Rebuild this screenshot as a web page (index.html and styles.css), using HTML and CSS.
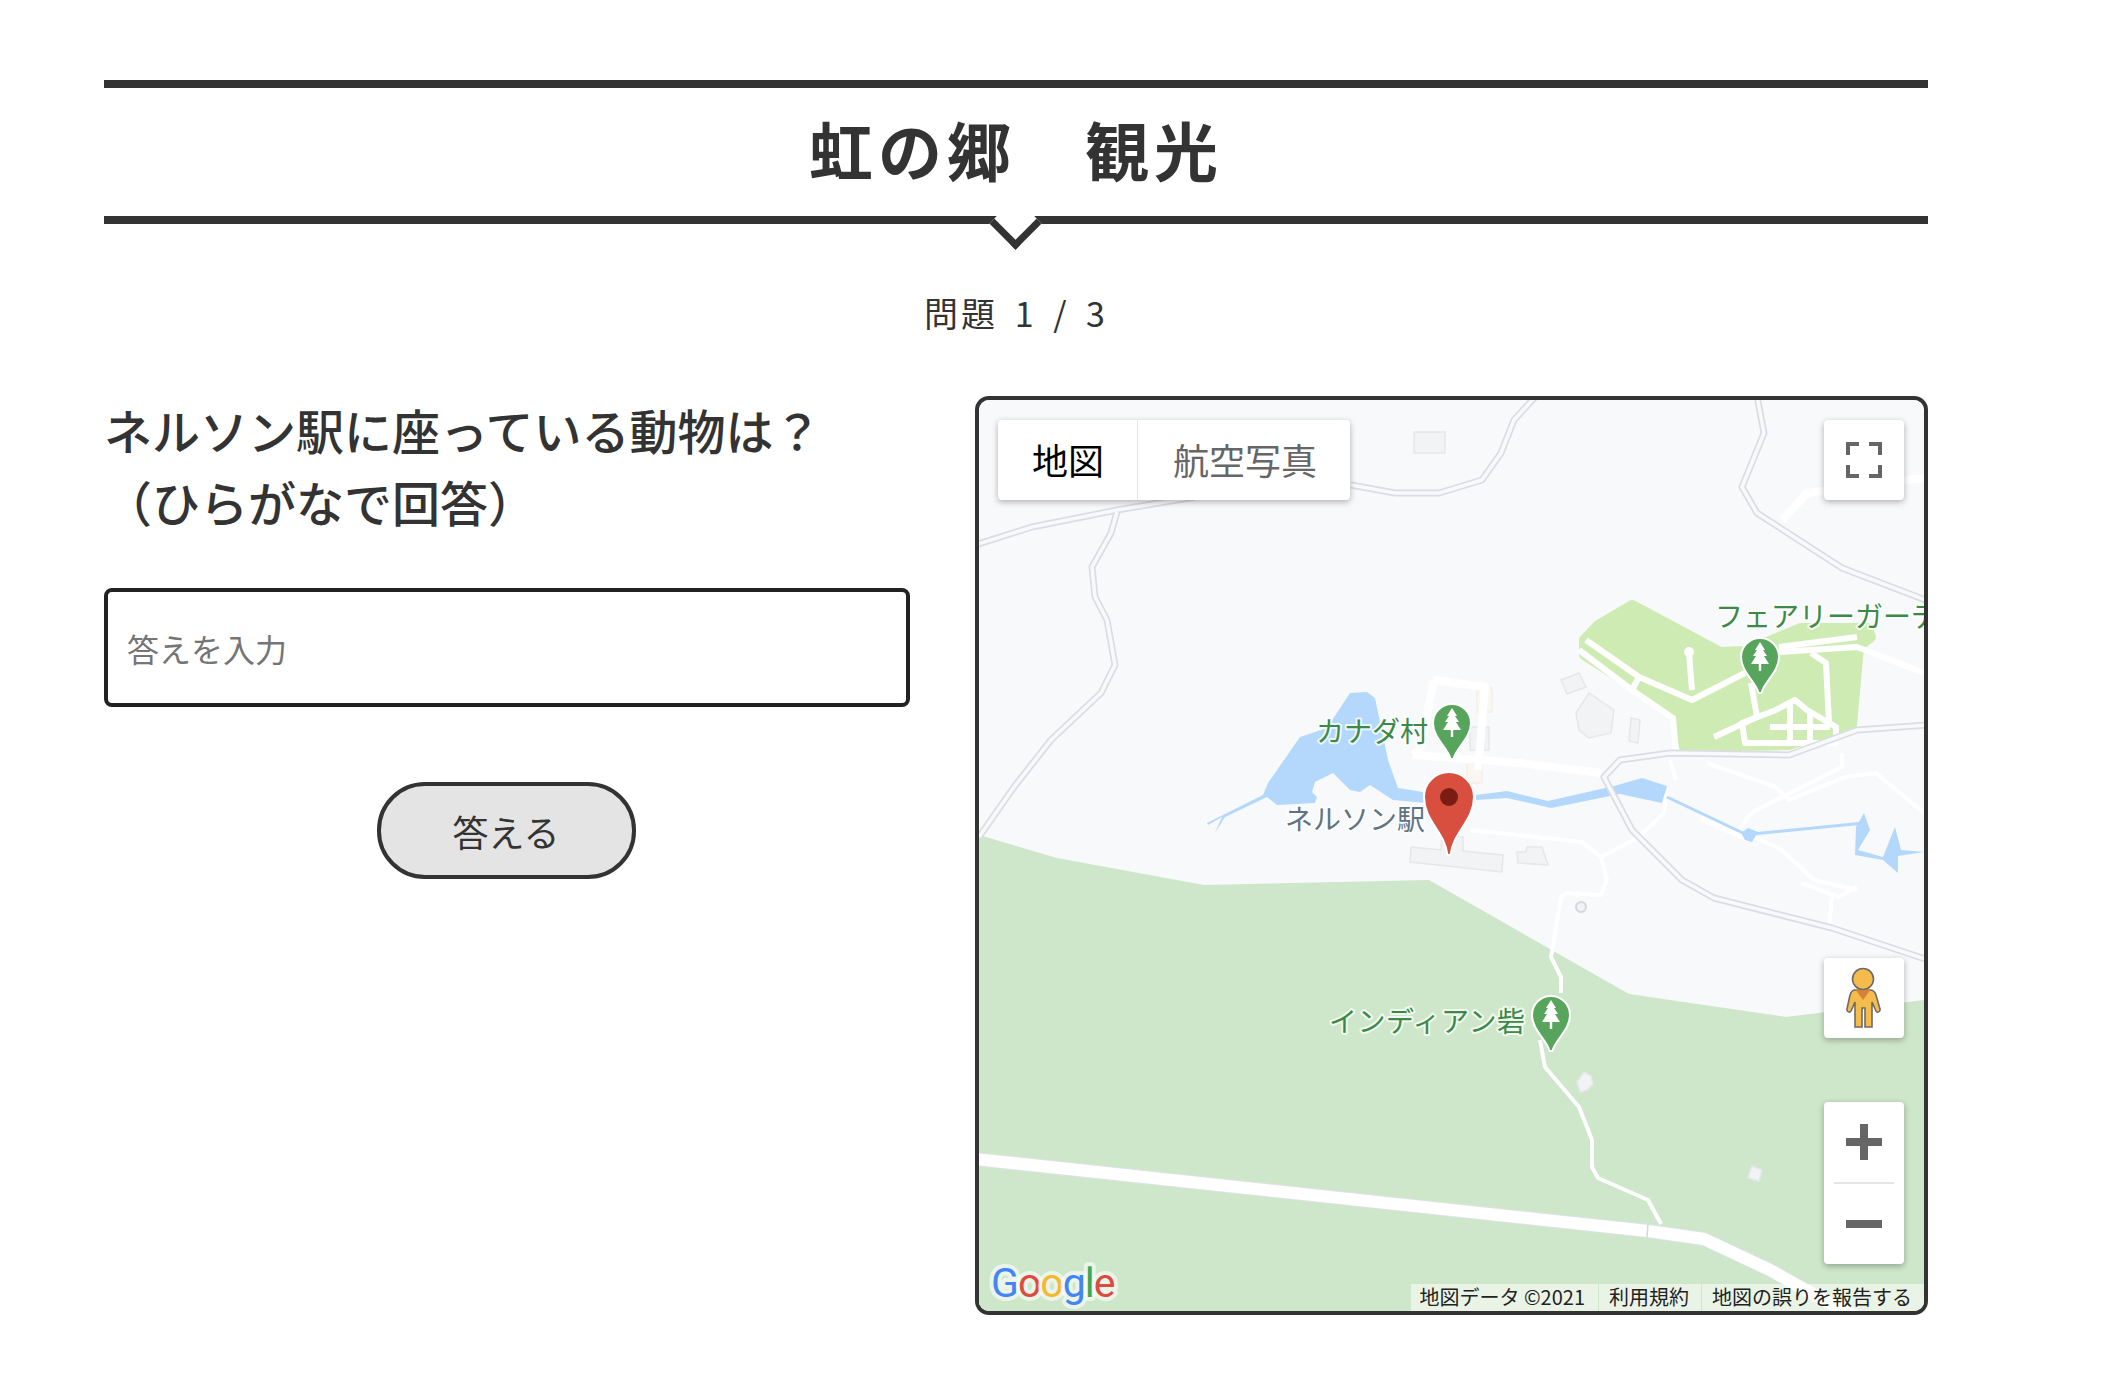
FILE: index.html
```html
<!DOCTYPE html>
<html lang="ja">
<head>
  <meta charset="UTF-8">
  <title>虹の郷 観光</title>
  <link rel="stylesheet" href="styles.css">
</head>
<body>
  <div class="page">
    <h1 class="title">虹の郷　観光</h1>
    <p class="progress">問題 1 / 3</p>

    <div class="quiz">
      <form class="answer-form">
        <h2 class="question">ネルソン駅に座っている動物は？<br>（ひらがなで回答）</h2>
        <input class="answer-input" type="text" placeholder="答えを入力">
        <button class="answer-btn" type="button">答える</button>
      </form>

      <div class="map">
        <!-- viewBox uses page coordinates so it is easy to compare with the screenshot -->
        <svg class="map-canvas" viewBox="979 400 945 911" width="945" height="911">
          <defs>
            <g id="roads">
              <polyline points="1536,396 1514,420 1501,453 1482,480 1439,493 1395,493 1351,485"/>
              <polyline points="975,545 1032,527 1117,510 1195,497"/>
              <polyline points="1117,512 1111,533 1092,567 1095,597 1107,620 1115,665 1101,693 1051,740 1014,787 979,837"/>
              <polyline points="1757,396 1764,433 1742,487 1757,513 1842,568 1928,601"/>
              <polyline points="1928,725 1857,730 1789,755 1670,753 1620,760 1604,777 1632,830 1682,880 1714,898 1832,928 1928,960"/>
            </g>
            <g id="pin">
              <path class="pin-body" d="M-1.500 36C-4 25-19 15-19 0A19 19 0 1 1 19 0C19 15 4 25 1.500 36Z"/>
              <path class="pin-tree" d="M0-15L5-7H3L7-1H4L9 7H1.200V14H-1.200V7H-9L-4-1H-7L-3-7H-5Z"/>
            </g>
          </defs>

          <rect class="land" x="979" y="400" width="945" height="911"/>
          <polygon class="forest" points="979,835 1057,858 1204,885 1429,880 1629,994 1786,1017 1924,1000 1924,1311 979,1311"/>
          <polygon class="park" points="1584,640 1598,625 1632,605 1668,624 1720,652 1745,651 1801,628 1868,628 1871,637 1859,647 1852,725 1789,745 1684,747 1678,718 1636,688 1584,655"/>

          <g class="building">
            <rect x="1414" y="432" width="31" height="21"/>
            <rect x="1470" y="727" width="19" height="23"/>
            <polygon points="1561,680 1579,673 1586,687 1567,694"/>
            <polygon points="1576,713 1589,693 1614,710 1611,733 1589,738 1579,730"/>
            <polygon points="1631,718 1640,720 1638,743 1629,741"/>
            <polygon points="1411,847 1441,850 1442,837 1463,837 1463,851 1503,855 1502,872 1410,862"/>
            <polygon points="1517,852 1526,852 1527,847 1542,847 1548,865 1518,863"/>
            <polygon points="1584,1072 1591,1076 1593,1084 1587,1090 1580,1092 1577,1082"/>
            <polygon points="1752,1166 1762,1170 1759,1181 1748,1178"/>
          </g>
          <g class="building-warm">
            <rect x="1477" y="688" width="15" height="24"/>
            <rect x="1467" y="763" width="15" height="20"/>
          </g>

          <!-- white footpaths under the water -->
          <g class="path">
            <polyline points="1470,830 1582,842 1601,857 1639,837 1664,813 1667,787"/>
            <polyline points="1670,760 1676,780"/>
            <polyline points="1751,813 1842,767 1842,753"/>
            <polyline points="1707,763 1776,787 1789,800 1845,777 1876,773 1924,813"/>
            <polyline points="1751,813 1739,830 1782,850 1814,880 1857,890"/>
            <polyline points="1801,883 1839,897 1857,887"/>
            <polyline points="1832,897 1829,927"/>
            <polyline points="1561,993 1561,977 1551,957 1554,940 1561,897 1567,893 1601,895 1607,880 1601,857"/>
            <polyline points="1540,1040 1545,1067 1579,1107 1592,1140 1592,1167 1598,1178 1648,1200 1661,1224"/>
          </g>
          <g class="path-wide">
            <polyline points="1434,680 1485,687 1478,770"/>
            <polyline points="1434,680 1420,750 1413,755"/>
            <polyline points="1413,755 1520,763 1601,773"/>
            <polyline points="1782,520 1807,493 1924,478"/>
            <polyline points="1701,817 1748,838"/>
          </g>

          <g class="water">
            <polygon points="1207,823 1263,795 1268,783 1300,737 1327,728 1350,693 1367,692 1375,698 1388,760 1398,788 1423,792 1427,803 1393,800 1370,785 1360,792 1350,790 1333,773 1315,782 1312,792 1317,797 1315,803 1277,805 1267,797 1225,817 1215,833 1222,817 1208,825"/>
            <polygon points="1476,795 1507,791 1548,801 1614,786 1642,778 1667,786 1662,803 1620,794 1551,808 1507,798 1476,800"/>
            <polygon points="1741,833 1748,828 1758,832 1752,842 1745,840"/>
            <polygon points="1864,813 1870,830 1858,850 1883,857 1895,827 1901,850 1924,852 1898,856 1898,873 1883,860 1855,855 1856,827"/>
            <polyline class="stream" points="1667,797 1745,834"/>
            <polyline class="stream" points="1752,834 1864,823"/>
          </g>

          <g class="path-park">
            <polyline points="1586,640 1639,677 1692,700 1745,673"/>
            <polyline points="1579,650 1632,690 1673,718 1676,752"/>
            <polyline points="1639,677 1632,690"/>
            <polyline points="1779,647 1857,637"/>
            <polyline points="1779,652 1857,647 1924,673"/>
            <polyline points="1689,653 1692,690"/>
            <polyline points="1811,653 1826,663 1829,723"/>
            <polyline points="1751,683 1757,717 1714,737"/>
            <polyline points="1776,710 1795,700 1807,710 1836,727 1836,743 1745,743 1742,723 1776,710"/>
            <polyline points="1790,705 1790,743"/>
            <polyline points="1810,712 1810,743"/>
            <polyline points="1770,727 1830,727"/>
          </g>
          <circle class="trail-dot" cx="1689" cy="652" r="5"/>
          <circle class="ring" cx="1581" cy="907" r="5"/>

          <g class="road-edge"><use href="#roads"/></g>
          <g class="road-fill"><use href="#roads"/></g>

          <polyline class="highway-edge" points="975,1159 1648,1231 1704,1239 1770,1270 1820,1298 1855,1316"/>
          <polyline class="highway" points="975,1159 1648,1231 1704,1239 1770,1270 1820,1298 1855,1316"/>
          <line class="highway-tick" x1="1648" y1="1224" x2="1647" y2="1237"/>

          <text class="label label-park" x="1316" y="742">カナダ村</text>
          <text class="label label-park" x="1715" y="627">フェアリーガーデン</text>
          <text class="label label-park label-wide" x="1329" y="1032">インディアン砦</text>
          <text class="label label-station" x="1285" y="830">ネルソン駅</text>

          <use href="#pin" x="1452" y="723"/>
          <use href="#pin" x="1760" y="657"/>
          <use href="#pin" x="1551" y="1015"/>

          <line class="marker-shadow" x1="1458" y1="832" x2="1468" y2="818"/>
          <path class="marker" d="M1447.500 855C1445 832 1424 821 1424 797A25 25 0 1 1 1474 797C1474 821 1453 832 1450.500 855Z"/>
          <circle class="marker-dot" cx="1449" cy="797" r="9"/>

          <text class="google" x="991" y="1297"><tspan class="g-blue">G</tspan><tspan class="g-red">o</tspan><tspan class="g-yellow">o</tspan><tspan class="g-blue">g</tspan><tspan class="g-green">l</tspan><tspan class="g-red">e</tspan></text>
        </svg>

        <div class="map-type">
          <span class="map-type-btn active">地図</span>
          <span class="map-type-btn">航空写真</span>
        </div>

        <div class="map-ctrl fullscreen">
          <svg viewBox="0 0 36 36" width="36" height="36"><path class="ctrl-line" d="M2 13V2H13M23 2H34V13M34 23V34H23M13 34H2V23"/></svg>
        </div>

        <div class="map-ctrl pegman">
          <svg viewBox="0 0 80 80" width="80" height="80">
            <path class="peg-body" d="M31 32H46C49 32 51 34 52 37L56 51C56.500 54 53 55 52 53L48 44V69H41V50H38V69H31V44L27 53C26 55 22.500 54 23 51L26 37C27 34 28 32 31 32Z"/>
            <path class="peg-scarf" d="M31 31H47L39 42Z"/>
            <circle class="peg-head" cx="39" cy="21" r="10.500"/>
          </svg>
        </div>

        <div class="map-ctrl zoom">
          <button class="zoom-btn" type="button"><svg viewBox="0 0 36 36" width="36" height="36"><path class="zoom-icon" d="M14 0H22V14H36V22H22V36H14V22H0V14H14Z"/></svg></button>
          <div class="zoom-line"></div>
          <button class="zoom-btn" type="button"><svg viewBox="0 0 36 36" width="36" height="36"><path class="zoom-icon" d="M0 14H36V22H0Z"/></svg></button>
        </div>

        <div class="attribution">
          <span>地図データ ©2021</span>
          <span>利用規約</span>
          <span>地図の誤りを報告する</span>
        </div>
      </div>
    </div>
  </div>
</body>
</html>
```

FILE: styles.css
```css
body {
  margin: 0;
  background: #fff;
  color: #333;
  font-family: "Noto Sans CJK JP", "Noto Sans", sans-serif;
}

.page {
  width: 1824px;
  margin-left: 104px;
  padding: 80px 0 75px;
}

/* Heading with the small arrow under it */
.title {
  position: relative;
  margin: 0;
  height: 128px;
  border-top: 8px solid #333;
  border-bottom: 8px solid #333;
  font-size: 64px;
  font-weight: 700;
  line-height: 120px;
  letter-spacing: 5px;
  text-align: center;
}

.title::after {
  content: "";
  position: absolute;
  left: 50%;
  bottom: -26px;
  width: 30px;
  height: 30px;
  margin-left: -19px;
  background: #fff;
  border-right: 7px solid #333;
  border-bottom: 7px solid #333;
  transform: rotate(45deg);
}

.progress {
  margin: 64px 0 0;
  font-size: 34px;
  line-height: 50px;
  letter-spacing: 3px;
  word-spacing: 6px;
  text-align: center;
}

.quiz {
  display: flex;
  justify-content: space-between;
  margin-top: 58px;
}

.answer-form {
  display: flex;
  flex-direction: column;
  width: 806px;
}

.question {
  margin: -3px 0 0;
  font-size: 48px;
  font-weight: 500;
  line-height: 72px;
}

.answer-input {
  box-sizing: border-box;
  width: 100%;
  height: 119px;
  margin-top: 51px;
  padding: 0 19px;
  background: #fff;
  border: 4px solid #222;
  border-radius: 8px;
  font-family: inherit;
  font-size: 32px;
}

.answer-input::placeholder {
  color: #757575;
  opacity: 1;
}

.answer-btn {
  box-sizing: border-box;
  align-self: center;
  width: 259px;
  height: 97px;
  margin: 75px 2px 0 0;
  padding: 0;
  background: #e4e4e4;
  border: 4px solid #333;
  border-radius: 48px;
  color: #333;
  font-family: inherit;
  font-size: 36px;
}

/* Map */
.map {
  position: relative;
  box-sizing: border-box;
  width: 953px;
  height: 919px;
  overflow: hidden;
  border: 4px solid #333;
  border-radius: 14px;
}

.map-canvas {
  display: block;
}

.land { fill: #f8f9fb; }
.forest { fill: #cee6c9; }

.park {
  fill: #cfebb4;
  stroke: #cfebb4;
  stroke-width: 10;
  stroke-linejoin: round;
}

.water polygon { fill: #b3d8fc; }

.stream {
  fill: none;
  stroke: #b3d8fc;
  stroke-width: 3;
}

.building rect,
.building polygon {
  fill: #f1f3f4;
  stroke: #e6e7ea;
  stroke-width: 1.500;
}

.building-warm rect {
  fill: #fbf6ef;
  stroke: #f1efec;
  stroke-width: 1.500;
}

.path polyline {
  fill: none;
  stroke: #fff;
  stroke-width: 4;
  stroke-linejoin: round;
}

.path-park polyline {
  fill: none;
  stroke: #fff;
  stroke-width: 6;
  stroke-linejoin: round;
}

.path-wide polyline {
  fill: none;
  stroke: #fff;
  stroke-width: 8;
  stroke-linejoin: round;
}

.trail-dot { fill: #fff; }

.ring {
  fill: #f1f3f4;
  stroke: #d5d7dc;
  stroke-width: 2;
}

.road-edge,
.road-fill {
  fill: none;
  stroke-linejoin: round;
}

.road-edge { stroke: #dcdde2; stroke-width: 7; }
.road-fill { stroke: #f8f9fb; stroke-width: 3.500; }

.highway,
.highway-edge {
  fill: none;
  stroke-linejoin: round;
}

.highway { stroke: #fff; stroke-width: 12; }
.highway-edge { stroke: #dfe3e4; stroke-width: 14; }

.highway-tick {
  stroke: #d5d8da;
  stroke-width: 1.500;
}

.label {
  font-size: 28px;
  paint-order: stroke;
  stroke: rgba(255, 255, 255, 0.75);
  stroke-width: 4px;
  stroke-linejoin: round;
}

.label-wide { letter-spacing: 0.500px; }
.label-park { fill: #3b8a46; }
.label-station { fill: #5f7482; }

.pin-body {
  fill: #57a55c;
  stroke: #fff;
  stroke-width: 2;
}

.pin-tree { fill: #fff; }

.marker {
  fill: #d94f3f;
  stroke: #fff;
  stroke-width: 2;
}

.marker-dot { fill: #7a1b14; }

.marker-shadow {
  stroke: #75848f;
  stroke-width: 2.500;
}

.google {
  font-family: Roboto, sans-serif;
  font-size: 41px;
  font-weight: 400;
  letter-spacing: -1px;
  paint-order: stroke;
  stroke: rgba(255, 255, 255, 0.6);
  stroke-width: 8px;
  stroke-linejoin: round;
}

.g-blue { fill: #4285f4; }
.g-red { fill: #db4c3f; }
.g-yellow { fill: #f4b82d; }
.g-green { fill: #3ba757; }

.map-type {
  position: absolute;
  top: 20px;
  left: 19px;
  display: flex;
  height: 80px;
  background: #fff;
  border-radius: 4px;
  box-shadow: 0 2px 6px rgba(0, 0, 0, 0.3);
}

.map-type-btn {
  padding: 0 33px 0 35px;
  color: #666;
  font-size: 36px;
  line-height: 78px;
}

.map-type-btn.active {
  padding: 0 33px 0 34px;
  border-right: 1px solid #e6e6e6;
  color: #000;
}

.map-ctrl {
  position: absolute;
  right: 20px;
  width: 80px;
  background: #fff;
  border-radius: 4px;
  box-shadow: 0 2px 6px rgba(0, 0, 0, 0.3);
}

.fullscreen {
  top: 20px;
  display: flex;
  align-items: center;
  justify-content: center;
  height: 80px;
}

.ctrl-line {
  fill: none;
  stroke: #666;
  stroke-width: 4;
}

.pegman {
  top: 558px;
  height: 80px;
}

.pegman svg { display: block; }

.peg-body {
  fill: #f5bc4b;
  stroke: #6b6b6b;
  stroke-width: 1.600;
}

.peg-scarf { fill: #d5833b; }

.peg-head {
  fill: #f5bc4b;
  stroke: #6b6b6b;
  stroke-width: 1.600;
}

.zoom {
  top: 702px;
  display: flex;
  flex-direction: column;
  align-items: center;
  height: 162px;
}

.zoom-btn {
  display: flex;
  align-items: center;
  justify-content: center;
  width: 80px;
  height: 80px;
  padding: 0;
  background: none;
  border: none;
}

.zoom-line {
  width: 60px;
  height: 2px;
  background: #e6e6e6;
}

.zoom-icon { fill: #666; }

.attribution {
  position: absolute;
  right: 0;
  bottom: 0;
  display: flex;
  gap: 1px;
  height: 27px;
  color: #222;
  font-size: 20px;
  line-height: 25px;
}

.attribution span {
  padding: 0 12px 0 10px;
  background: rgba(255, 255, 255, 0.55);
}

.attribution span:first-child {
  padding: 0 13px 0 8px;
}
```
